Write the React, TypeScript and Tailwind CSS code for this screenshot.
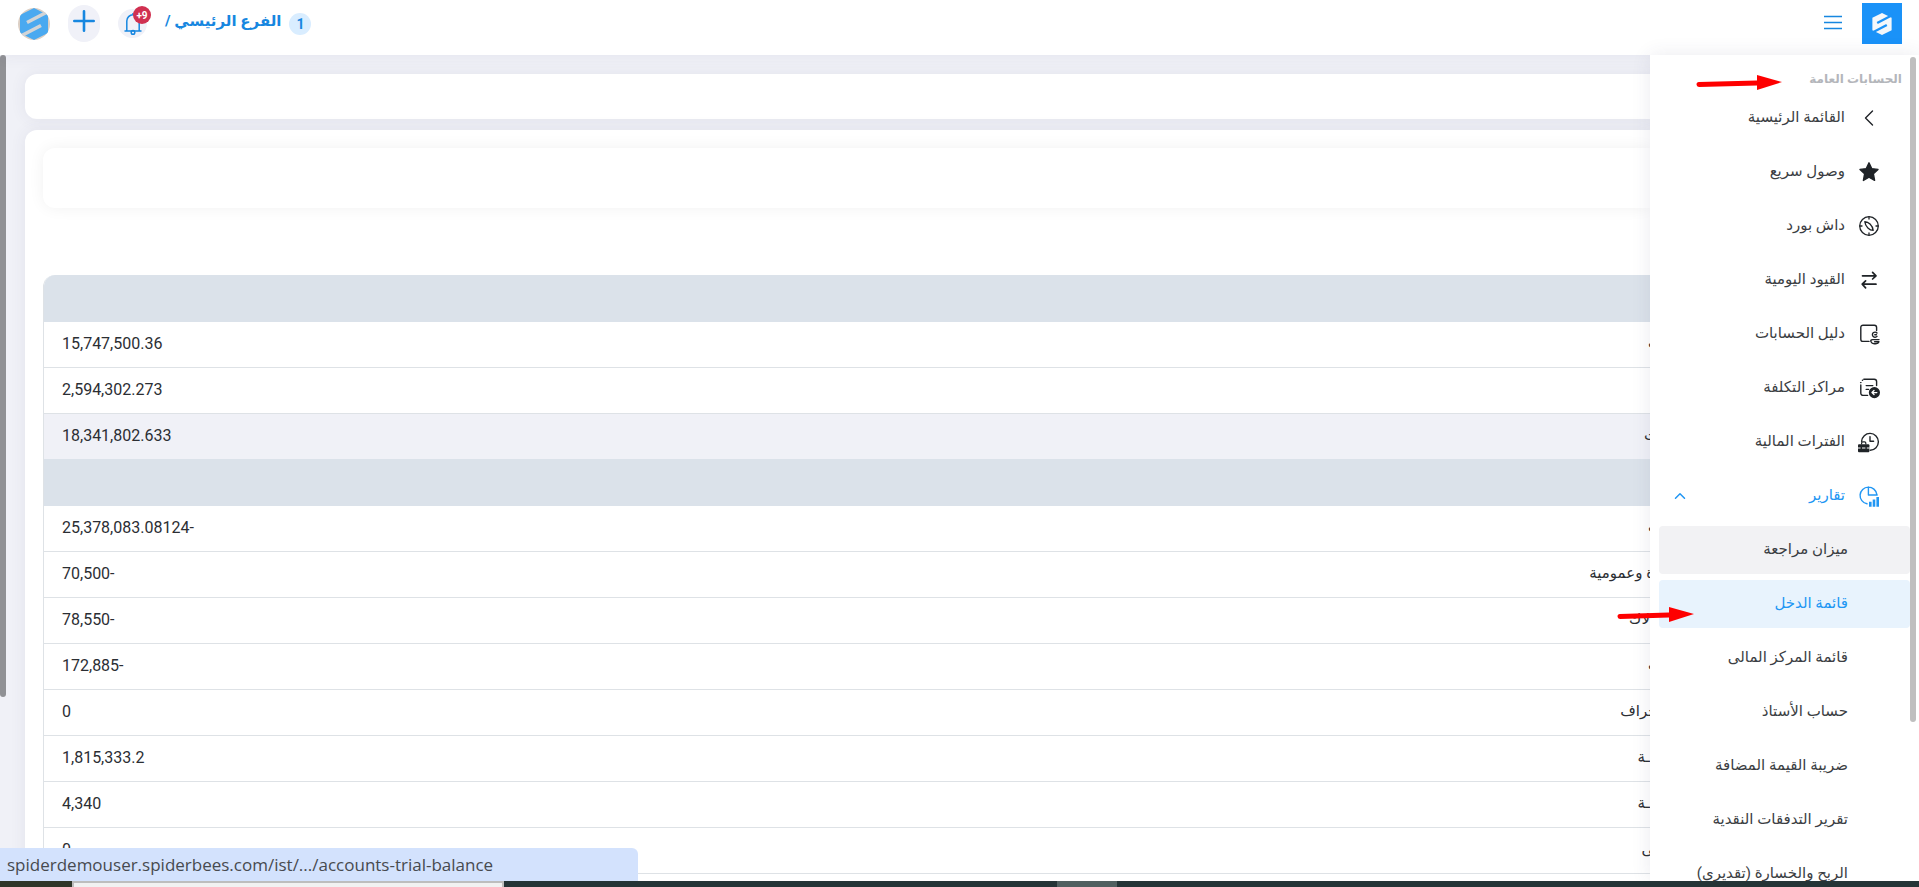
import type { ReactNode } from "react";
import { ChevronLeft, ChevronUp } from "lucide-react";

type MenuItem = { label: string; icon: ReactNode };

const line = {
  width: 22,
  height: 22,
  viewBox: "0 0 22 22",
  fill: "none",
  stroke: "currentColor",
  strokeWidth: 1.4,
  strokeLinecap: "round" as const,
  strokeLinejoin: "round" as const,
  "aria-hidden": true,
};

function StarIcon() {
  return (
    <svg {...line}>
      <path
        fill="currentColor"
        d="M11 1.8 13.7 7.6 20 8.4 15.4 12.8 16.6 19.4 11 16.2 5.4 19.4 6.6 12.8 2 8.4 8.3 7.6Z"
      />
    </svg>
  );
}

function CompassIcon() {
  return (
    <svg {...line} strokeWidth={1.3}>
      <circle cx="11" cy="11" r="9.3" />
      <path d="M11 2v2M11 18v2M2 11h2M18 11h2" />
      <path d="M6.8 6.6C10.4 6.8 14.4 10 15.2 15.4 11.6 15.2 7.4 12 6.8 6.6Z" />
    </svg>
  );
}

function SwapIcon() {
  return (
    <svg {...line} strokeWidth={1.7}>
      <path d="M4.5 6.8h13M14.6 3.4 18 6.8l-3.4 3.2M18 15.2H4.5M7.6 11.8 4.2 15.2l3.4 3.6" />
    </svg>
  );
}

function LedgerIcon() {
  return (
    <svg {...line}>
      <path d="M18.6 7.6V4.4a2.2 2.2 0 0 0-2.2-2.2H5a2.2 2.2 0 0 0-2.2 2.2v11.8A2.2 2.2 0 0 0 5 18.4h6" />
      <path d="M19 10a2.6 2.6 0 1 0 0 3.4M16.8 11.7h1.6" />
      <path d="M21 16.6h-6.4c-1.6 0-2.2 1-1.6 2.2.5 1.2 1.6 2 3.2 2h1.6c1.8 0 2.8-.8 3.2-2h-4.4" />
    </svg>
  );
}

function CostIcon() {
  return (
    <svg {...line}>
      <path d="M18.6 8.6V4.6A2.4 2.4 0 0 0 16.2 2.2H5.8M2.8 8v8.2a2.2 2.2 0 0 0 2.2 2.2h4.6M2.6 5.6h.4M4.4 3.2h.2" />
      <path d="M8.2 8.6h6.6M8.2 12.4h2.4" />
      <circle cx="16.4" cy="15.6" r="4.9" fill="currentColor" />
      <path stroke="#fff" d="M18.8 15.6h-4.6M16 13.6l-2 2 2 2" />
    </svg>
  );
}

function PeriodIcon() {
  return (
    <svg {...line}>
      <path d="M3.6 10.4a8.4 8.4 0 1 1 8.6 8.8M12 5.6v4.6h3.6" />
      <path strokeWidth={1.2} d="M3.6 13v-1a1.2 1.2 0 0 1 1.2-1.2h1.8A1.2 1.2 0 0 1 7.8 12v1" />
      <rect x="0" y="13.2" width="11.4" height="8" rx="1" fill="currentColor" stroke="none" />
      <path stroke="#fff" strokeWidth={1} d="M0 17h2.2M4.4 17h2.6M9.2 17h2.2" />
    </svg>
  );
}

function ReportsIcon() {
  return (
    <svg {...line}>
      <path d="M9 18.8a8.4 8.4 0 1 1 9.8-9.4M10.4 2v8h8.8" />
      <path strokeLinecap="butt" strokeWidth={2.6} d="M12.3 21.8v-5M16 21.8v-7.4M19.7 21.8V12" />
    </svg>
  );
}

function Logo({ size, fill, cut }: { size: number; fill: string; cut: string }) {
  return (
    <svg width={size} height={size} viewBox="0 0 64 64" aria-hidden="true">
      <path fill={fill} d="M32 0 60 14v36L32 64 4 50V14Z" />
      <path stroke={cut} strokeWidth="7" fill="none" d="M18 29 64 5M46 35 0 59" />
    </svg>
  );
}

function RedArrow({ length, className }: { length: number; className: string }) {
  const neck = length - 25;
  return (
    <svg className={className} width={length} height="16" viewBox={`0 0 ${length} 16`} aria-hidden="true">
      <path d={`M3 9.5 ${neck} 8`} stroke="#fe0000" strokeWidth="5" strokeLinecap="round" />
      <path d={`M${neck} 0 ${length} 7 ${neck} 15Z`} fill="#fe0000" />
    </svg>
  );
}

const menu: MenuItem[] = [
  { label: "القائمة الرئيسية", icon: <ChevronLeft size={32} strokeWidth={1.2} /> },
  { label: "وصول سريع", icon: <StarIcon /> },
  { label: "داش بورد", icon: <CompassIcon /> },
  { label: "القيود اليومية", icon: <SwapIcon /> },
  { label: "دليل الحسابات", icon: <LedgerIcon /> },
  { label: "مراكز التكلفة", icon: <CostIcon /> },
  { label: "الفترات المالية", icon: <PeriodIcon /> },
];

const reports = [
  { label: "ميزان مراجعة", state: "bg-[#f2f2f4] text-[#3b3e43]" },
  { label: "قائمة الدخل", state: "bg-[#e8f3fd] text-[#2196f3]" },
  { label: "قائمة المركز المالى", state: "text-[#3b3e43]" },
  { label: "حساب الأستاذ", state: "text-[#3b3e43]" },
  { label: "ضريبة القيمة المضافة", state: "text-[#3b3e43]" },
  { label: "تقرير التدفقات النقدية", state: "text-[#3b3e43]" },
  { label: "الربح والخسارة (تقديرى)", state: "text-[#3b3e43]" },
];

// the label column runs on underneath the side menu
const income = [
  { label: "ت", tuck: "-mr-3", value: "15,747,500.36" },
  { label: "", tuck: "", value: "2,594,302.273" },
];

const expenses = [
  { label: "ت", tuck: "-mr-3", value: "25,378,083.08124-" },
  { label: "ة وعمومية", tuck: "-mr-1", value: "70,500-" },
  { label: "لاك", tuck: "", value: "78,550-" },
  { label: "ت", tuck: "-mr-3", value: "172,885-" },
  { label: "\u200dحراف", tuck: "-mr-2", value: "0" },
  { label: "\u200dـة", tuck: "", value: "1,815,333.2" },
  { label: "\u200dـة", tuck: "", value: "4,340" },
  { label: "\u200dى", tuck: "-mr-1", value: "0" },
];

type RowProps = { label: string; tuck: string; value: string; total?: boolean };

function Row({ label, tuck, value, total }: RowProps) {
  const cell = total ? "border-b border-[#dbe2ea] pb-[2px]" : "border-b border-[#dee2e6] pb-[2px]";
  return (
    <tr className={total ? "h-[46px] bg-[#f0f1f7]" : "h-[46px]"}>
      <td className={`${cell} text-[15px] whitespace-nowrap`}>
        <span className={`inline-block ${tuck}`}>{label}</span>
      </td>
      <td className={`${cell} pl-[18px] text-left`}>
        <span dir="ltr">{value}</span>
      </td>
    </tr>
  );
}

export default function App() {
  return (
    <div
      dir="rtl"
      className="flex h-screen flex-col overflow-hidden bg-[#f0f1f7] font-['Roboto','DejaVu_Sans',sans-serif] text-[#2b2e33]"
    >
      <header className="relative z-10 flex h-[55px] shrink-0 items-start justify-between bg-white pr-[17px] pl-[18px] shadow-[0_0_16px_rgba(60,60,100,0.07)]">
        <div className="flex items-start gap-5 pt-[3px]">
          <a href="#" aria-label="Spider" className="flex h-[41px] w-10 items-center justify-center bg-[#1a92f8]">
            <Logo size={22} fill="#f4f7fa" cut="#1a92f8" />
          </a>
          <button type="button" aria-label="القائمة" className="mt-3 text-[#1787e0]">
            <svg width="18" height="15" viewBox="0 0 18 15" stroke="currentColor" strokeWidth="1.3">
              <path d="M0 1.5h18M0 7.5h18M0 13.5h18" />
            </svg>
          </button>
        </div>

        <div className="flex items-center gap-[18px] pt-[5px]">
          <a href="#" className="flex items-center gap-2 text-[15px] font-bold text-[#1787e0]">
            <span className="flex size-[22px] items-center justify-center rounded-full bg-[#d9edff] text-sm">1</span>
            <span className="pb-1">الفرع الرئيسي /</span>
          </a>
          <button
            type="button"
            aria-label="الإشعارات"
            className="relative flex size-[29px] items-center justify-center rounded-full bg-[#f0f1f8] text-[#1787e0]"
          >
            <svg width="18" height="22" viewBox="0 0 18 22" fill="none" stroke="currentColor" strokeWidth="1.5">
              <path d="M.5 18h17M2.8 18V8a6.2 6.2 0 0 1 12.4 0v10M9 2V0" />
              <circle cx="9" cy="19.4" r="1.8" />
            </svg>
            <span
              dir="ltr"
              className="absolute -top-[3px] left-[15px] flex size-[18px] items-center justify-center rounded-full bg-[#d03050] text-[10px] font-bold text-white"
            >
              +9
            </span>
          </button>
          <button
            type="button"
            aria-label="إضافة"
            className="flex h-[37px] w-8 items-start justify-center rounded-full bg-[#f0f1f8] pt-[5px] text-[#1787e0]"
          >
            <svg width="22" height="22" viewBox="0 0 22 22" stroke="currentColor" strokeWidth="2.6" strokeLinecap="round">
              <path d="M11 1.3v19.4M1.3 11h19.4" />
            </svg>
          </button>
          <a href="#" aria-label="الحساب" className="flex size-8 items-center justify-center overflow-hidden rounded-full bg-[#dccfc4]">
            <Logo size={34} fill="#4aa9f0" cut="#d2d4d6" />
          </a>
        </div>
      </header>

      <div className="flex min-h-0 flex-1">
        <aside className="relative z-20 flex w-[269px] shrink-0 bg-white pr-[3px] shadow-[0_0_18px_rgba(60,60,100,0.10)]">
          <div className="mt-[2px] h-[665px] w-[6px] rounded-full bg-[#bfbfbf]" />
          <nav className="min-w-0 flex-1 overflow-hidden pl-[9px] text-[15px]">
            <h2 className="h-[39px] pt-4 pr-[8px] text-xs font-bold text-[#b4b6bb]">الحسابات العامة</h2>
            {menu.map((item) => (
              <a key={item.label} href="#" className="mb-[6px] flex h-12 items-center gap-[10px] pr-[27px] text-[#3b3e43]">
                <span className="flex w-7 justify-center text-[#1f2327]">{item.icon}</span>
                <span className="pb-[2px]">{item.label}</span>
              </a>
            ))}
            <button
              type="button"
              aria-expanded="true"
              className="mb-[6px] flex h-12 w-full items-center gap-[10px] pr-[27px] pl-3 text-[#2196f3]"
            >
              <span className="flex w-7 justify-center">
                <ReportsIcon />
              </span>
              <span className="flex-1 pb-[2px] text-right">تقارير</span>
              <ChevronUp size={18} />
            </button>
            {reports.map((item) => (
              <a
                key={item.label}
                href="#"
                className={`mb-[6px] flex h-12 items-center rounded pr-[62px] pb-[2px] ${item.state}`}
              >
                {item.label}
              </a>
            ))}
          </nav>
          <RedArrow length={86} className="absolute top-5 left-[46px]" />
          <RedArrow length={77} className="absolute top-[552px] -left-[33px]" />
        </aside>

        <main className="flex min-w-0 flex-1 flex-col gap-[11px] overflow-hidden pt-[19px] pl-[19px]">
          <div className="h-[45px] shrink-0 rounded-l-xl bg-white shadow-[0_0_16px_rgba(60,60,100,0.08)]" />
          <div className="flex-1 rounded-tl-xl bg-white pt-[18px] pl-[18px] shadow-[0_0_16px_rgba(60,60,100,0.08)]">
            <div className="mb-[67px] h-[60px] rounded-l-xl bg-white shadow-[0_0_16px_rgba(0,0,0,0.06)]" />
            <div className="overflow-hidden rounded-tl-xl border-l border-[#dee2e6]">
              <table className="w-full border-separate border-spacing-0 text-base">
                <tbody>
                  <tr className="h-[47px] bg-[#dbe2ea]">
                    <td colSpan={2} />
                  </tr>
                  {income.map((row) => (
                    <Row key={row.value} {...row} />
                  ))}
                  <Row label="ت" tuck="-mr-2" value="18,341,802.633" total />
                  <tr className="h-[46px] bg-[#dbe2ea]">
                    <td colSpan={2} />
                  </tr>
                  {expenses.map((row, i) => (
                    <Row key={i} {...row} />
                  ))}
                </tbody>
              </table>
            </div>
          </div>
        </main>
        <div className="h-[642px] w-[6px] shrink-0 rounded-full bg-[#909195]" />
      </div>

      <footer dir="ltr" className="relative z-30 flex h-[6px] shrink-0 bg-[#243436]">
        <div className="w-[72px] bg-[#303629]" />
        <div className="w-[432px] border-x-2 border-t-2 border-[#bdbdbd] bg-[#f1f1f1]" />
        <div className="ml-[553px] w-[60px] bg-[#506060]" />
        <div className="absolute bottom-full left-0 flex h-[33px] w-[638px] items-center rounded-tr-md bg-[#d3e2fd] pl-[7px] font-['Open_Sans',sans-serif] text-[17px] text-[#474a4f]">
          spiderdemouser.spiderbees.com/ist/.../accounts-trial-balance
        </div>
      </footer>
    </div>
  );
}
